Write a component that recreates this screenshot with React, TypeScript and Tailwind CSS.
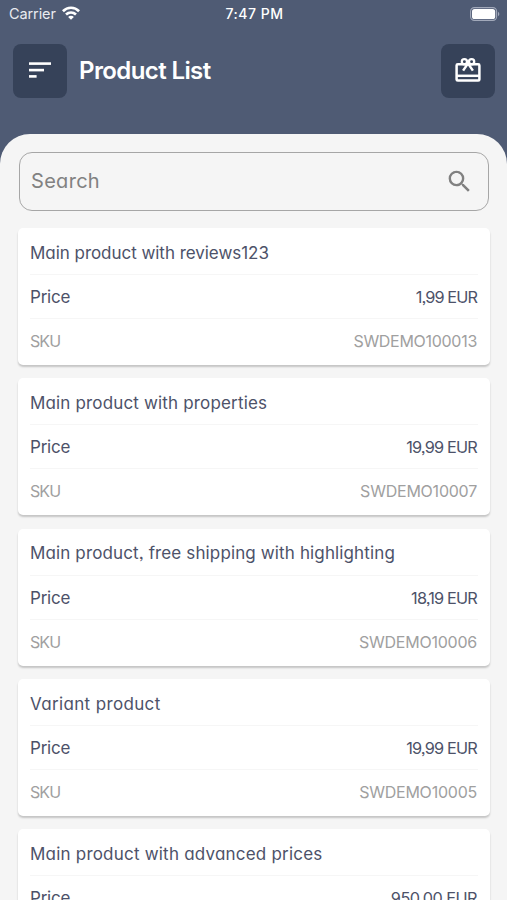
import { FC } from 'react';
import { MdSearch } from 'react-icons/md';

interface IProduct
{
    name: string;
    nameClass: string;
    price: string;
    priceClass: string;
    sku: string;
    skuClass: string;
}

const PRODUCTS: IProduct[] = [
    { name: 'Main product with reviews123', nameClass: 'tracking-[-0.04px]', price: '1,99 EUR', priceClass: 'tracking-[-0.9px]', sku: 'SWDEMO100013', skuClass: 'tracking-[-0.29px]' },
    { name: 'Main product with properties', nameClass: 'tracking-[0.16px]', price: '19,99 EUR', priceClass: 'tracking-[-0.8px]', sku: 'SWDEMO10007', skuClass: 'tracking-[-0.23px]' },
    { name: 'Main product, free shipping with highlighting', nameClass: 'tracking-[0.13px]', price: '18,19 EUR', priceClass: 'tracking-[-0.82px]', sku: 'SWDEMO10006', skuClass: 'tracking-[-0.23px]' },
    { name: 'Variant product', nameClass: 'tracking-[0.35px]', price: '19,99 EUR', priceClass: 'tracking-[-0.8px]', sku: 'SWDEMO10005', skuClass: 'tracking-[-0.23px]' },
    { name: 'Main product with advanced prices', nameClass: 'tracking-[0.21px]', price: '950,00 EUR', priceClass: 'tracking-[-0.55px]', sku: 'SWDEMO10004', skuClass: 'tracking-[-0.23px]' }
];

const StatusBarView: FC<{}> = () =>
{
    return (
        <div className="grid grid-cols-3 items-center h-7 pl-[9px] pr-[7px] text-white [font-feature-settings:normal]">
            <div className="flex items-center gap-[6px]">
                <span className="text-[14.5px] leading-none tracking-[-0.1px] text-[#e9ebf0]">Carrier</span>
                <svg className="w-[18px] h-[14px] mb-[2px]" viewBox="0 0 18 14" fill="none" stroke="white" strokeWidth="2.7">
                    <path d="M.9 5.2C5.4.6 12.6.6 17.1 5.2" />
                    <path d="M4 8.6c2.9-2.6 7.1-2.6 10 0" />
                    <path d="M9 13.8 6.1 10.9c1.6-1.5 4.2-1.5 5.8 0z" fill="white" stroke="none" />
                </svg>
            </div>
            <span className="text-center text-[14px] leading-none font-medium tracking-[0.5px]">7:47 PM</span>
            <svg className="justify-self-end w-[30px] h-[14px] mb-px" viewBox="0 0 30 14">
                <rect x="0.6" y="0.6" width="26" height="12.8" rx="3.8" fill="none" stroke="#a2a9ba" strokeWidth="1.1" />
                <rect x="2" y="2" width="23.2" height="10" rx="2.6" fill="white" />
                <path d="M28 4.8c1.8.8 1.8 3.6 0 4.4z" fill="#a2a9ba" />
            </svg>
        </div>
    );
};

const GiftIcon: FC<{}> = () =>
{
    return (
        <svg className="w-[26px] h-6 mb-0.5" viewBox="0 0 26 24" fill="none" stroke="white" strokeWidth="2.5">
            <rect x="1.6" y="6.2" width="22.8" height="16.4" rx="1.2" />
            <path d="M1.6 17.8h22.8" />
            <circle cx="9.4" cy="3.8" r="2.6" strokeWidth="2.3" />
            <circle cx="16.6" cy="3.8" r="2.6" strokeWidth="2.3" />
            <path d="M13 5.4 8.1 12.6M13 5.4l4.9 7.2" />
        </svg>
    );
};

const ProductCardView: FC<{ product: IProduct }> = ({ product }) =>
{
    return (
        <div className="h-[137px] shrink-0 rounded-[5px] bg-white px-3 pt-[3px] text-[17px] text-[#4d5269] shadow-[0_2px_2px_rgba(0,0,0,0.2)]">
            <div className="flex items-center h-11 pt-0.5 border-b border-[#f6f6f6]">
                <span className={ product.nameClass }>{ product.name }</span>
            </div>
            <div className="flex items-baseline justify-between h-11 pt-[10px] pr-px border-b border-[#f6f6f6]">
                <span className="tracking-[-0.2px]">Price</span>
                <span className={ `text-[16.3px] ${ product.priceClass }` }>{ product.price }</span>
            </div>
            <div className="flex items-center justify-between h-11 pr-px text-[16px] text-[#a0a0a0]">
                <span className="tracking-[-0.9px]">SKU</span>
                <span className={ product.skuClass }>{ product.sku }</span>
            </div>
        </div>
    );
};

export default function App()
{
    return (
        <div className="flex flex-col w-[507px] h-[900px] overflow-hidden whitespace-nowrap bg-[#4f5b74] font-['Inter','Liberation_Sans',sans-serif] [font-feature-settings:'cv11','ss03']">
            <StatusBarView />
            <header className="flex items-center h-[106px] shrink-0 pl-[13px] pr-[12.5px] pb-[21px] text-white">
                <button className="flex items-center justify-center size-[54px] rounded-lg bg-[#364259]">
                    <svg className="w-[22px] h-4 mb-px" viewBox="0 0 22 16" fill="white">
                        <rect y="0.3" width="22" height="2.6" />
                        <rect y="6.8" width="15" height="2.6" />
                        <rect y="13.1" width="7.6" height="2.6" />
                    </svg>
                </button>
                <h1 className="ml-3 text-[24px] font-semibold tracking-[-0.6px]">Product List</h1>
                <button className="flex items-center justify-center size-[54px] ml-auto rounded-lg bg-[#364259]">
                    <GiftIcon />
                </button>
            </header>
            <main className="flex flex-col flex-1 min-h-0 overflow-hidden rounded-t-[30px] bg-[#f5f5f5] pl-[18px] pr-[17px] pt-[18px]">
                <div className="flex items-center justify-between shrink-0 h-[59px] mx-px pl-[11px] pr-[14px] rounded-[13px] border-[1.5px] border-[#a6a6a6] text-[#818181]">
                    <span className="pb-0.5 text-[20px] tracking-[0.3px]">Search</span>
                    <MdSearch className="size-[29px]" />
                </div>
                <div className="flex flex-col gap-[13.3px] pt-[17px]">
                    { PRODUCTS.map(product => <ProductCardView key={ product.sku } product={ product } />) }
                </div>
            </main>
        </div>
    );
}
